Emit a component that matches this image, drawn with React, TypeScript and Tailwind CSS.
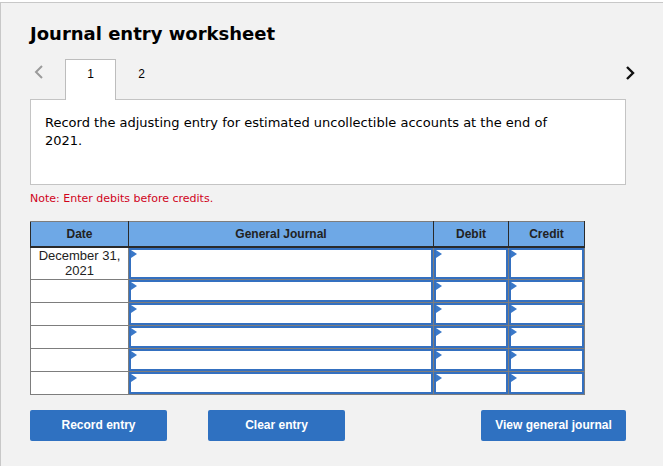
import React from "react";

const rows = [
  { date: ["December 31,", "2021"], tall: true },
  { date: [], tall: false },
  { date: [], tall: false },
  { date: [], tall: false },
  { date: [], tall: false },
  { date: [], tall: false },
];

const Marker = () => (
  <svg
    className="absolute left-0 top-0"
    width="6"
    height="8"
    viewBox="0 0 6 8"
  >
    <polygon points="0,0 6,4 0,8" fill="#3a78c8" />
  </svg>
);

const InputCell = ({ tall }: { tall: boolean }) => (
  <td className="border border-[#7d7d7d] p-0 align-top">
    <div
      className={`relative border-2 border-[#3470c0] bg-white ${
        tall ? "h-[31px]" : "h-[22px]"
      }`}
    >
      <Marker />
    </div>
  </td>
);

export default function App() {
  return (
    <div className="w-[663px] h-[466px] bg-white pt-[2px] overflow-hidden">
      <div className="h-full border-l border-t border-[#c8c8c8] bg-[#f2f2f2] pl-[29px] pr-[37px] pt-[20px] font-['DejaVu_Sans',sans-serif] text-black">
        <h1 className="text-[18px] font-bold leading-[22px]">
          Journal entry worksheet
        </h1>

        {/* tabs */}
        <div className="relative z-10 -mb-px mt-[14px] -mr-[10px] flex items-start">
          <div className="flex w-[35px] pl-[3px] pt-[5px]">
            <svg width="12" height="16" viewBox="0 0 12 16">
              <polyline
                points="9,2 3,8 9,14"
                fill="none"
                stroke="#9b9b9b"
                strokeWidth="2"
              />
            </svg>
          </div>
          <div className="h-[41px] w-[51px] border border-b-0 border-[#bdbdbd] bg-white pt-[5px] text-center font-['Liberation_Sans',sans-serif] text-[12px] leading-[18px]">
            1
          </div>
          <div className="w-[51px] pt-[6px] text-center font-['Liberation_Sans',sans-serif] text-[12px] leading-[18px]">
            2
          </div>
          <div className="ml-auto flex pt-[6px]">
            <svg width="12" height="16" viewBox="0 0 12 16">
              <polyline
                points="3,2 9,8 3,14"
                fill="none"
                stroke="#111"
                strokeWidth="2.4"
              />
            </svg>
          </div>
        </div>

        <div className="h-[86px] border border-[#c4c4c4] bg-white px-[14px] pt-[14px]">
          <p className="max-w-[520px] text-[13px] leading-[18px]">
            Record the adjusting entry for estimated uncollectible accounts at
            the end of 2021.
          </p>
        </div>

        <p className="mt-[7px] text-[11px] leading-[14px] text-[#d0021b]">
          Note: Enter debits before credits.
        </p>

        <table className="mt-[15px] border-collapse font-['Liberation_Sans',sans-serif] text-[12px]">
          <thead>
            <tr className="h-[25px] bg-[#6ea8e6] text-[#222] font-bold">
              <th className="w-[98px] border-t border-[#7d7d7d] border-x border-x-[#2a2a2a] border-b-2 border-b-[#2a2a2a] p-0">
                Date
              </th>
              <th className="w-[305px] border-t border-[#7d7d7d] border-x border-x-[#2a2a2a] border-b-2 border-b-[#2a2a2a] p-0">
                General Journal
              </th>
              <th className="w-[75px] border-t border-[#7d7d7d] border-x border-x-[#2a2a2a] border-b-2 border-b-[#2a2a2a] p-0">
                Debit
              </th>
              <th className="w-[76px] border-t border-[#7d7d7d] border-x border-x-[#2a2a2a] border-b-2 border-b-[#2a2a2a] p-0">
                Credit
              </th>
            </tr>
          </thead>
          <tbody>
            {rows.map((row, i) => (
              <tr key={i}>
                <td className="border border-[#7d7d7d] bg-white p-0 text-center align-top text-[13px] leading-[15px] text-[#222]">
                  {row.date.map((line) => (
                    <div key={line}>{line}</div>
                  ))}
                </td>
                <InputCell tall={row.tall} />
                <InputCell tall={row.tall} />
                <InputCell tall={row.tall} />
              </tr>
            ))}
          </tbody>
        </table>

        <div className="mt-[15px] flex font-['Liberation_Sans',sans-serif] text-[12px] font-bold text-white">
          <button className="h-[31px] w-[137px] rounded-[2px] bg-[#2f71c1]">
            Record entry
          </button>
          <button className="ml-[41px] h-[31px] w-[137px] rounded-[2px] bg-[#2f71c1]">
            Clear entry
          </button>
          <button className="ml-auto h-[31px] w-[145px] rounded-[2px] bg-[#2f71c1]">
            View general journal
          </button>
        </div>
      </div>
    </div>
  );
}
